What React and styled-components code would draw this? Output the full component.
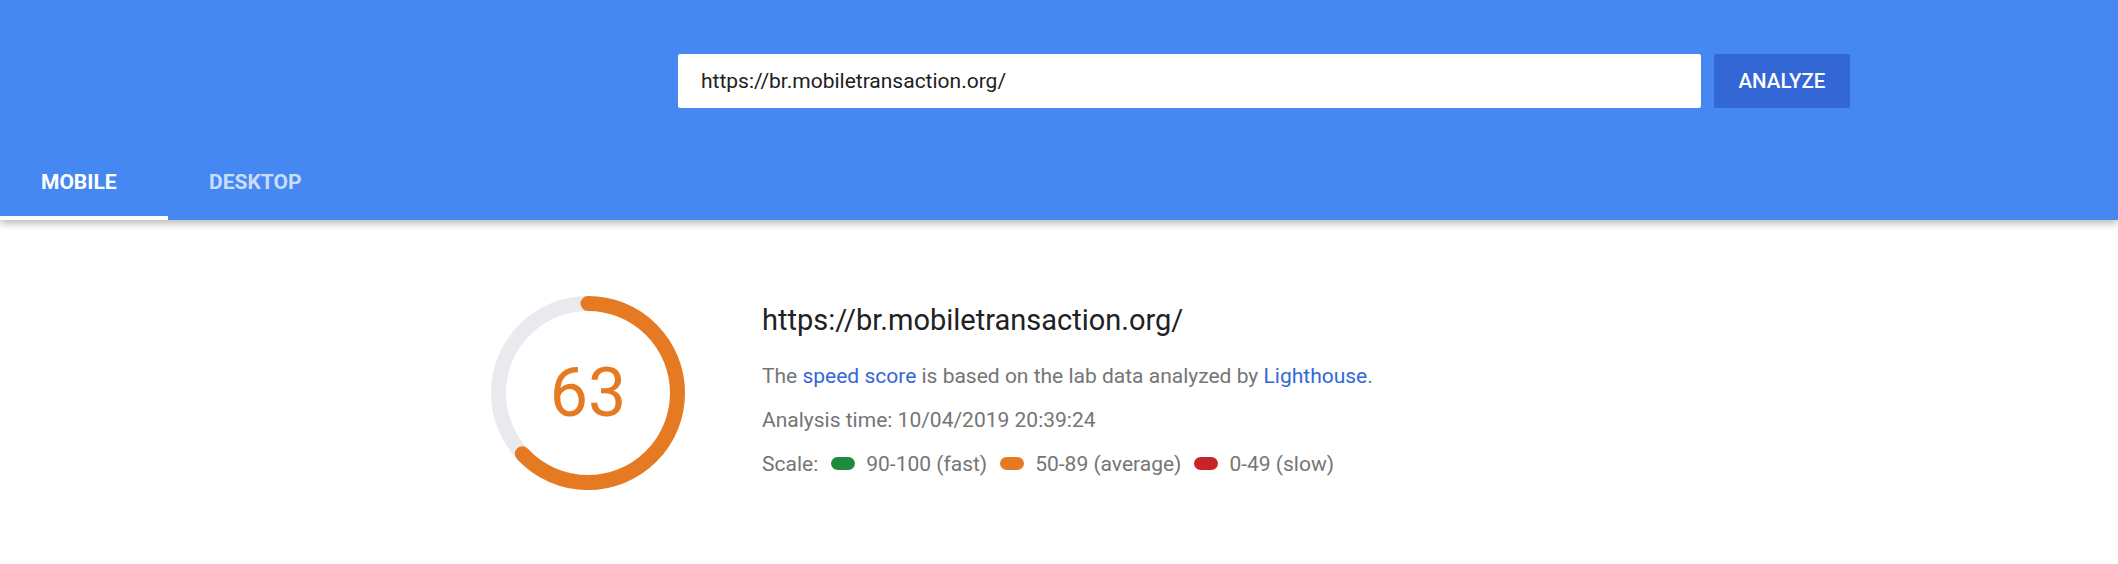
import React from "react"
import styled, { createGlobalStyle } from "styled-components"

const GlobalStyle = createGlobalStyle`
    body {
        margin: 0;
        background: #ffffff;
        font-family: Roboto, "Liberation Sans", sans-serif;
    }
`

const SCORE = 63
const RADIUS = 89.5
const CIRC = 2 * Math.PI * RADIUS

export default function App() {
    return (
        <>
            <GlobalStyle />
            <Header>
                <SearchRow>
                    <UrlInput defaultValue="https://br.mobiletransaction.org/" />
                    <AnalyzeButton>ANALYZE</AnalyzeButton>
                </SearchRow>
                <Tabs>
                    <Tab active>MOBILE</Tab>
                    <Tab>DESKTOP</Tab>
                </Tabs>
            </Header>

            <Summary>
                <Gauge>
                    <svg width="194" height="194" viewBox="0 0 194 194">
                        <circle cx="97" cy="97" r={RADIUS} fill="none" stroke="#e8eaed" strokeWidth="15" />
                        <circle
                            cx="97" cy="97" r={RADIUS}
                            fill="none" stroke="#e67a22" strokeWidth="15" strokeLinecap="round"
                            strokeDasharray={`${CIRC * SCORE / 100} ${CIRC}`}
                            transform="rotate(-90 97 97)"
                        />
                    </svg>
                    <ScoreNumber>{SCORE}</ScoreNumber>
                </Gauge>

                <Details>
                    <PageUrl>https://br.mobiletransaction.org/</PageUrl>
                    <InfoLine>
                        The <Link href="#">speed score</Link> is based on the lab data analyzed by <Link href="#">Lighthouse</Link>.
                    </InfoLine>
                    <InfoLine>Analysis time: 10/04/2019 20:39:24</InfoLine>
                    <InfoLine>
                        Scale:
                        <Pill color="#1e8a3c" />90-100 (fast)
                        <Pill color="#e67a22" />50-89 (average)
                        <Pill color="#c7242a" />0-49 (slow)
                    </InfoLine>
                </Details>
            </Summary>
        </>
    )
}

const Header = styled.header`
    background-color: #4688f1;
    height: 220px;
    display: flex;
    flex-direction: column;
    box-shadow: 0 3px 8px rgba(0, 0, 0, 0.3);
    position: relative;
`
const SearchRow = styled.div`
    display: flex;
    padding: 54px 0 0 678px;
    gap: 13px;
`
const UrlInput = styled.input`
    width: 1023px;
    height: 54px;
    box-sizing: border-box;
    border: none;
    border-radius: 2px;
    padding: 0 23px;
    font-family: Roboto, sans-serif;
    font-size: 21px;
    color: #212121;
    outline: none;
`
const AnalyzeButton = styled.button`
    width: 136px;
    height: 54px;
    border: none;
    border-radius: 2px;
    background-color: #3367d6;
    color: #ffffff;
    font-family: Roboto, sans-serif;
    font-weight: 500;
    font-size: 20.5px;
    cursor: pointer;
`
const Tabs = styled.nav`
    display: flex;
    margin-top: auto;
`
const Tab = styled.div`
    width: 168px;
    height: 74px;
    box-sizing: border-box;
    padding: 1px 0 0 41px;
    display: flex;
    align-items: center;
    font-size: 21px;
    font-weight: 700;
    color: ${({ active }) => active ? '#ffffff' : 'rgba(255, 255, 255, 0.72)'};
    border-bottom: 4px solid ${({ active }) => active ? '#ffffff' : 'transparent'};
`
const Summary = styled.section`
    display: flex;
    align-items: center;
    padding: 76px 0 0 491px;
    gap: 77px;
`
const Gauge = styled.div`
    position: relative;
    width: 194px;
    height: 194px;
    svg {
        display: block;
    }
`
const ScoreNumber = styled.div`
    position: absolute;
    inset: 0;
    display: flex;
    align-items: center;
    justify-content: center;
    font-size: 68px;
    font-weight: 400;
    color: #e67a22;
`
const Details = styled.div`
    display: flex;
    flex-direction: column;
    padding-top: 2px;
`
const PageUrl = styled.h1`
    margin: 0 0 17px;
    font-size: 29px;
    font-weight: 400;
    color: #212121;
`
const InfoLine = styled.p`
    margin: 0;
    display: flex;
    align-items: center;
    white-space: pre;
    font-size: 21px;
    line-height: 44px;
    color: #757575;
`
const Link = styled.a`
    color: #3367d6;
    text-decoration: none;
`
const Pill = styled.span`
    display: inline-block;
    width: 24px;
    height: 13px;
    border-radius: 7px;
    background-color: ${({ color }) => color};
    margin: 0 11px 0 13px;
`
